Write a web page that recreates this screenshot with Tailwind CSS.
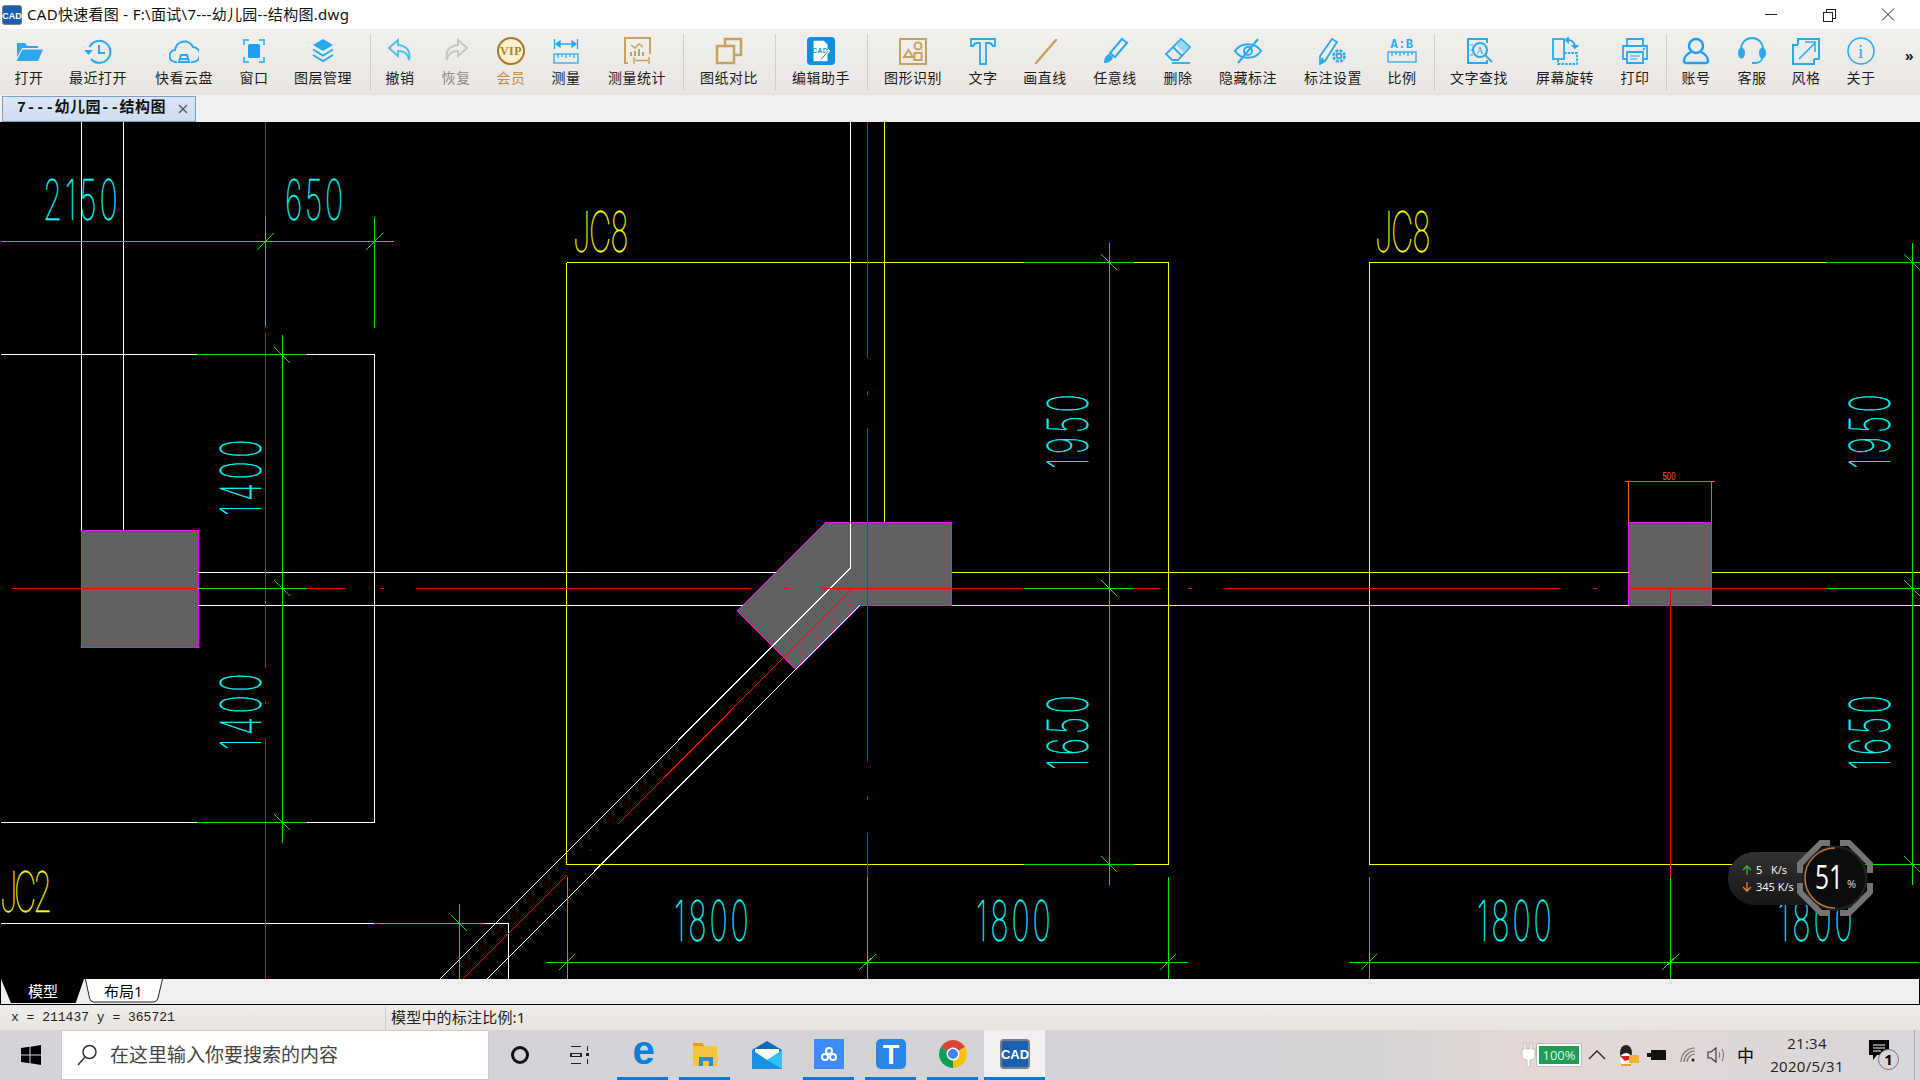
<!DOCTYPE html>
<html lang="zh">
<head>
<meta charset="UTF-8" />
<title>CAD快速看图</title>
<script src="https://cdn.jsdelivr.net/npm/@tailwindcss/browser@4"></script>
</head>
<body class="w-[1920px] h-[1080px] overflow-hidden flex flex-col bg-black text-black font-['Noto_Sans','Noto_Sans_CJK_SC',sans-serif]">

<!-- title bar -->
<header class="h-[29px] bg-white flex items-center shrink-0">
  <svg class="ml-[2px] w-[20px] h-[20px]" viewBox="0 0 20 20"><rect x="0.5" y="0.5" width="19" height="19" rx="2" fill="#1a5fb0" stroke="#7a7f86"/><text x="10" y="14" text-anchor="middle" font-size="9" font-weight="700" fill="#fff" font-family="Liberation Sans">CAD</text></svg>
  <span class="ml-[5px] text-[15px] leading-none tracking-[0.3px] text-[#111]">CAD快速看图 - F:\面试\7---幼儿园--结构图.dwg</span>
  <div class="ml-auto flex items-center">
    <svg class="w-[60px] h-[29px]" viewBox="0 0 60 29"><path d="M26 14.500h12" stroke="#222" fill="none" shape-rendering="crispEdges"/></svg>
    <svg class="w-[60px] h-[29px]" viewBox="0 0 60 29"><path d="M24.500 12.500h9v9h-9zM27.500 12v-3h9v9h-3" stroke="#222" fill="none" shape-rendering="crispEdges"/></svg>
    <svg class="w-[60px] h-[29px] mr-[1px]" viewBox="0 0 60 29"><path d="M23 8.500l12 12M35 8.500l-12 12" stroke="#222" fill="none"/></svg>
  </div>
</header>

<!-- toolbar -->
<nav class="h-[66px] shrink-0 flex pl-[2px] pt-[8px] bg-linear-to-b from-[#f1f0ee] to-[#e9e6e2] text-[14px] leading-[18px] tracking-[0.5px] text-[#1c1c1c]">
  <button class="w-[54px] flex flex-col items-center">
    <svg class="w-[30px] h-[28px]" viewBox="0 0 30 28" fill="#2aa9f0"><path d="M3 6h8l2 3h11v2H8l-5 9z"/><path d="M8.500 12.500H29L24 24H2.500z"/></svg>
    <span class="mt-[4px]">打开</span></button>
  <button class="w-[84px] flex flex-col items-center">
    <svg class="w-[30px] h-[28px]" viewBox="0 0 30 28" fill="none" stroke="#2aa9f0" stroke-width="2"><path d="M6.500 10A11 11 0 1 1 8 22"/><path d="M1 13h9l-4.500 5z" fill="#2aa9f0" stroke="none"/><path d="M16 8v8h6"/></svg>
    <span class="mt-[4px]">最近打开</span></button>
  <button class="w-[84px] ml-[2px] flex flex-col items-center">
    <svg class="w-[30px] h-[28px]" viewBox="0 0 30 28" fill="none" stroke="#2aa9f0" stroke-width="2"><path d="M8 25H7a6 6 0 0 1-1-12A9.500 9.500 0 0 1 24 10a7.500 7.500 0 0 1-1 15h-1"/><path d="M10 25l2-7h6l2 7z"/><path d="M10 22h10"/></svg>
    <span class="mt-[4px]">快看云盘</span></button>
  <button class="w-[54px] ml-[1px] flex flex-col items-center">
    <svg class="w-[30px] h-[28px]" viewBox="0 0 30 28" fill="none" stroke="#4dbbf3" stroke-width="2"><path d="M5 8V3h5M20 3h5v5M25 20v5h-5M10 25H5v-5"/><rect x="9" y="7" width="12" height="14" rx="1.500" fill="#1e9ff0" stroke="none"/></svg>
    <span class="mt-[4px]">窗口</span></button>
  <button class="w-[84px] flex flex-col items-center">
    <svg class="w-[30px] h-[28px]" viewBox="0 0 30 28" fill="none" stroke="#2aa9f0" stroke-width="2"><path d="M15 2l10 6-10 6-10-6z" fill="#2aa9f0" stroke="none"/><path d="M5 12.500l10 6 10-6"/><path d="M5 18l10 6 10-6"/></svg>
    <span class="mt-[4px]">图层管理</span></button>
  <div class="w-[1px] h-[56px] -mt-[3px] ml-[5px] bg-[#d0cec9]"></div>
  <button class="w-[54px] ml-[2px] flex flex-col items-center">
    <svg class="w-[30px] h-[28px]" viewBox="0 0 30 28" fill="none" stroke="#55bdf0" stroke-width="2"><path d="M13 3L4 11l9 8v-5c6 0 10 2 11 9 2-9-2-14-11-15z"/></svg>
    <span class="mt-[4px]">撤销</span></button>
  <button class="w-[54px] ml-[2px] flex flex-col items-center text-[#8d8d8d]">
    <svg class="w-[30px] h-[28px]" viewBox="0 0 30 28" fill="none" stroke="#c6c6c6" stroke-width="2"><path d="M17 3l9 8-9 8v-5c-6 0-10 2-11 9-2-9 2-14 11-15z"/></svg>
    <span class="mt-[4px]">恢复</span></button>
  <button class="w-[54px] ml-[1px] flex flex-col items-center text-[#bf8f3a]">
    <svg class="w-[30px] h-[28px]" viewBox="0 0 30 28"><circle cx="15" cy="14" r="13" fill="#faf0d0" stroke="#a9782a" stroke-width="2"/><text x="15" y="18" text-anchor="middle" font-size="12" font-weight="700" fill="#b67f22" font-family="Liberation Serif">VIP</text></svg>
    <span class="mt-[4px]">会员</span></button>
  <button class="w-[54px] ml-[1px] flex flex-col items-center">
    <svg class="w-[30px] h-[28px]" viewBox="0 0 30 28" fill="none" stroke="#2aa9f0" stroke-width="1.300"><path d="M3.500 2v10M26.500 2v10M5 7h20"/><path d="M5 7l4-3v6zM25 7l-4-3v6z" fill="#2aa9f0"/><rect x="3" y="17" width="24" height="9"/><path d="M7 17v4M11 17v3M15 17v4M19 17v3M23 17v4"/></svg>
    <span class="mt-[4px]">测量</span></button>
  <button class="w-[84px] ml-[2px] flex flex-col items-center">
    <svg class="w-[30px] h-[28px]" viewBox="0 0 30 28" fill="none" stroke="#c7a25c" stroke-width="2"><path d="M6 26H3V1h25v16"/><path d="M9 8l4 3 4-4 4 3" stroke-width="1.500"/><path d="M9 19v-4M13 19v-5M17 19v-7M21 19v-4" stroke-width="2"/><path d="M12 20v7M27 20v7M13 23.500h13" stroke-width="1.500"/></svg>
    <span class="mt-[4px]">测量统计</span></button>
  <div class="w-[1px] h-[56px] -mt-[3px] ml-[4px] bg-[#d0cec9]"></div>
  <button class="w-[84px] ml-[3px] flex flex-col items-center">
    <svg class="w-[30px] h-[28px]" viewBox="0 0 30 28" fill="none" stroke="#c7a25c" stroke-width="2.500"><path d="M11 9V2h16v16h-7"/><rect x="3" y="9" width="17" height="17"/></svg>
    <span class="mt-[4px]">图纸对比</span></button>
  <div class="w-[1px] h-[56px] -mt-[3px] ml-[4px] bg-[#d0cec9]"></div>
  <button class="w-[84px] ml-[3px] flex flex-col items-center">
    <svg class="w-[30px] h-[28px]" viewBox="0 0 30 30"><rect width="30" height="30" rx="4" fill="#0f8fe0"/><path d="M7 4h11l4 4v18H7z" fill="#fff"/><text x="14" y="17" text-anchor="middle" font-size="7" font-weight="700" fill="#0f8fe0" font-family="Liberation Sans">CAD</text><path d="M15 24l9-10" stroke="#fff" stroke-width="3"/><path d="M15 24l8-9" stroke="#0f8fe0" stroke-width="1"/></svg>
    <span class="mt-[4px]">编辑助手</span></button>
  <div class="w-[1px] h-[56px] -mt-[3px] ml-[4px] bg-[#d0cec9]"></div>
  <button class="w-[84px] ml-[3px] flex flex-col items-center">
    <svg class="w-[30px] h-[28px]" viewBox="0 0 30 28" fill="none" stroke="#c7a25c" stroke-width="2"><rect x="2" y="2" width="26" height="25"/><path d="M6 20l4.500-7 4.500 7z"/><circle cx="20" cy="9" r="3.500"/><rect x="16.500" y="16" width="7" height="7"/></svg>
    <span class="mt-[4px]">图形识别</span></button>
  <button class="w-[54px] ml-[1px] flex flex-col items-center">
    <svg class="w-[30px] h-[28px]" viewBox="0 0 30 28" fill="none" stroke="#2aa9ee" stroke-width="1.800"><path d="M3 2h24v7h-2c-1-2-2-3-4-3h-3v21h-6V6H9C7 6 6 7 5 9H3z"/></svg>
    <span class="mt-[4px]">文字</span></button>
  <button class="w-[70px] flex flex-col items-center">
    <svg class="w-[30px] h-[28px]" viewBox="0 0 30 28" fill="none" stroke="#c7a25c" stroke-width="2.500" stroke-linecap="round"><path d="M6 26L26 3"/></svg>
    <span class="mt-[4px]">画直线</span></button>
  <button class="w-[70px] flex flex-col items-center">
    <svg class="w-[30px] h-[28px]" viewBox="0 0 30 28" fill="none" stroke="#2aa9ee" stroke-width="2"><path d="M22 2l5 4-12 14-5-4z"/><path d="M9 17c-3 1-5 4-5 9 4 0 8-2 9-6z" fill="#2aa9ee" stroke="none"/></svg>
    <span class="mt-[4px]">任意线</span></button>
  <button class="w-[54px] ml-[1px] flex flex-col items-center">
    <svg class="w-[30px] h-[28px]" viewBox="0 0 30 28" fill="none" stroke="#2aa9ee" stroke-width="1.800"><path d="M18 2l9 8-12 13H9l-6-6z"/><path d="M10 10l9 9"/><path d="M13 8l5-5 8 7-5 6z" fill="#9cd5f5" stroke="none"/><path d="M9 26h18"/></svg>
    <span class="mt-[4px]">删除</span></button>
  <button class="w-[84px] ml-[1px] flex flex-col items-center">
    <svg class="w-[30px] h-[28px]" viewBox="0 0 30 28" fill="none" stroke="#2aa9ee" stroke-width="2"><path d="M2 14c6-9 20-9 26 0-6 9-20 9-26 0z"/><circle cx="15" cy="14" r="4"/><path d="M25 2L5 26"/></svg>
    <span class="mt-[4px]">隐藏标注</span></button>
  <button class="w-[84px] ml-[1px] flex flex-col items-center">
    <svg class="w-[30px] h-[28px]" viewBox="0 0 30 28" fill="none" stroke="#2aa9ee" stroke-width="1.800"><path d="M14 2l5 3-12 19-5 3 0-8z"/><path d="M4 20l-2 7 5-3z" fill="#2aa9ee" stroke="none"/><circle cx="21" cy="19" r="5.500" stroke-width="2.500" stroke-dasharray="3 1.300"/><circle cx="21" cy="19" r="2.500"/></svg>
    <span class="mt-[4px]">标注设置</span></button>
  <button class="w-[54px] flex flex-col items-center">
    <svg class="w-[30px] h-[28px]" viewBox="0 0 30 28" fill="none" stroke="#2aa9ee" stroke-width="1.300"><text x="15" y="11" text-anchor="middle" font-size="12" font-weight="700" fill="#2aa9ee" stroke="none" font-family="Liberation Mono">A:B</text><rect x="1" y="15" width="28" height="10"/><path d="M5 15v4M9 15v3M13 15v4M17 15v3M21 15v4M25 15v3"/></svg>
    <span class="mt-[4px]">比例</span></button>
  <div class="w-[1px] h-[56px] -mt-[3px] ml-[5px] bg-[#d0cec9]"></div>
  <button class="w-[84px] ml-[2px] flex flex-col items-center">
    <svg class="w-[30px] h-[28px]" viewBox="0 0 30 28" fill="none" stroke="#2aa9ee" stroke-width="2"><path d="M23 6V2H4v24h19v-3"/><circle cx="16" cy="13" r="7"/><path d="M21 18l7 7"/><path d="M6 8h3M6 13h3M6 18h3" stroke-width="1"/><text x="16" y="17" text-anchor="middle" font-size="10" fill="#2aa9ee" stroke="none" font-family="Liberation Serif">A</text></svg>
    <span class="mt-[4px]">文字查找</span></button>
  <button class="w-[84px] ml-[2px] flex flex-col items-center">
    <svg class="w-[30px] h-[28px]" viewBox="0 0 30 28" fill="none" stroke="#2aa9ee" stroke-width="1.800"><rect x="3" y="2" width="11" height="20"/><path d="M14 16h13v11H8v-5" stroke-dasharray="2.500 1.200"/><path d="M18 3c3 0 6 2 7 6"/><path d="M18 1v4l-2-2zM23 9h4l-2 2z" fill="#2aa9ee"/></svg>
    <span class="mt-[4px]">屏幕旋转</span></button>
  <button class="w-[54px] ml-[1px] flex flex-col items-center">
    <svg class="w-[30px] h-[28px]" viewBox="0 0 30 28" fill="none" stroke="#2aa9ee" stroke-width="1.800"><path d="M7 9V2h16v7"/><path d="M7 22H3V9h24v13h-4"/><path d="M7 15h16v11H7z"/><path d="M10 19h10M10 22h7" stroke-width="1"/><path d="M23 12h2"/></svg>
    <span class="mt-[4px]">打印</span></button>
  <div class="w-[1px] h-[56px] -mt-[3px] ml-[4px] bg-[#d0cec9]"></div>
  <button class="w-[54px] ml-[2px] flex flex-col items-center">
    <svg class="w-[30px] h-[28px]" viewBox="0 0 30 28" fill="none" stroke="#1ea1f1" stroke-width="2.500"><circle cx="15" cy="9" r="7"/><path d="M10 15c-4 2-7 5-7 9 0 1 1 2 2 2h20c1 0 2-1 2-2 0-4-3-7-7-9"/></svg>
    <span class="mt-[4px]">账号</span></button>
  <button class="w-[54px] ml-[2px] flex flex-col items-center">
    <svg class="w-[30px] h-[28px]" viewBox="0 0 30 28" fill="none" stroke="#2aa9ee" stroke-width="1.800"><path d="M4 12A11 11 0 0 1 26 12"/><ellipse cx="4.500" cy="16" rx="3.500" ry="5.500" fill="#2aa9ee" stroke="none"/><ellipse cx="25.500" cy="16" rx="3.500" ry="5.500" fill="#2aa9ee" stroke="none"/><path d="M25 21c0 3-3 5-7 5h-3"/></svg>
    <span class="mt-[4px]">客服</span></button>
  <button class="w-[54px] flex flex-col items-center">
    <svg class="w-[30px] h-[28px]" viewBox="0 0 30 28" fill="none" stroke="#2aa9ee" stroke-width="2"><path d="M7 8H2v19h21v-5"/><path d="M7 8V2h21v20h-5"/><path d="M8 22L24 6M14 5h10v10" stroke-width="1.500"/></svg>
    <span class="mt-[4px]">风格</span></button>
  <button class="w-[54px] ml-[1px] flex flex-col items-center">
    <svg class="w-[30px] h-[28px]" viewBox="0 0 30 28" fill="none" stroke="#2aa9ee" stroke-width="1.500"><circle cx="15" cy="14" r="13"/><text x="15" y="21" text-anchor="middle" font-size="19" fill="#2aa9ee" stroke="none" font-family="Liberation Serif">i</text></svg>
    <span class="mt-[4px]">关于</span></button>
  <span class="ml-[17px] mt-[10px] text-[14px] font-bold">»</span>
</nav>

<!-- drawing tabs -->
<div class="h-[27px] shrink-0 bg-[#efefef] flex pl-[2px] pt-[1px]">
  <div class="w-[194px] h-[26px] flex items-center justify-between pl-[14px] pr-[6px] bg-linear-to-b from-[#dbe6f5] to-[#cfdcef] border border-[#7d9ec9] text-[15px] font-bold tracking-[0.4px] text-[#111] font-['Liberation_Mono','Noto_Sans_CJK_SC',monospace]">
    <span>7---幼儿园--结构图</span>
    <svg class="w-[12px] h-[12px]" viewBox="0 0 12 12"><path d="M2 2l8 8M10 2l-8 8" stroke="#555" stroke-width="1.300"/></svg>
  </div>
</div>

<!-- drawing -->
<main class="relative h-[857px] shrink-0 bg-black overflow-hidden">
  <svg class="absolute inset-0 w-[1920px] h-[857px]" viewBox="0 122 1920 857" fill="none" shape-rendering="crispEdges">
    <g fill="#606060" stroke="#ff00ff">
      <rect x="81.500" y="530.500" width="117" height="117"/>
      <path d="M825.500 522.500H951.500V605.500H860L796 670 737 611z"/>
      <rect x="1628.500" y="522.500" width="83" height="83"/>
    </g>
    <path stroke="#ffffff" d="M81.500 122V530M123.500 122V530M1 354.500H197M307 354.500H374.500V822.500H307M1 822.500H197M198 572.500H776M198 605.500H743M850.500 122V568L440 979M860 605L487 979M1 923.500H374M484 923.500H508.500V979"/>
    <path stroke="#ffff00" d="M884.500 122V522M566.500 262.500V864.500H1024M1134 864.500H1168.500V262.500H1134M1024 262.500H566.500M952 572.500H1629M952 605.500H1629M1712 572.500H1920M1712 605.500H1920M1369.500 864.500V262.500H1826M1369.500 864.500H1732"/>
    <path stroke="#ff0000" d="M265.500 122V216M265.500 333V668M265.500 701V704M265.500 738V979M12 588.500H197M307 588.500H346M380 588.500H384M416 588.500H751M784 588.500H788M821 588.500H1023M1134 588.500H1160M1188 588.500H1192M1225 588.500H1560M1593 588.500H1597M1630 588.500H1826M867.500 122V358M867.500 391V395M867.500 428V762M867.500 796V800M867.500 833V877M1670.500 588V877M853 588L781 660 618 824M591 850L590 851M567 875L463 979"/>
    <path stroke="#00e600" d="M1 241.500H394M265.500 216V327M374.500 217V328M282.500 335V843M197 354.500H307M197 588.500H307M197 822.500H307M374 923.500H484M459.500 904V979M546 962.500H1188M567.500 877V979M867.500 877V979M1168.500 877V979M1109.500 243V885M1024 262.500H1134M1024 588.500H1134M1024 864.500H1134M1912.500 243V885M1826 262.500H1920M1826 588.500H1920M1855 864.500H1920M1349 962.500H1919M1369.500 877V979M1670.500 877V979M257 250L274 233M366 250L383 233M274 347L290 363M274 580L290 596M274 814L290 830M451 915L467 931M1101 254L1117 270M1101 580L1117 596M1101 856L1117 872M1904 254L1920 270M1904 580L1920 596M1904 856L1920 872M559 970L575 954M859 970L876 954M1160 970L1176 954M1361 970L1377 954M1662 970L1679 954"/>
    <path stroke="#e0641a" d="M1628.500 522V481.500H1711.500V522M1625 481.500H1715"/>
    <g fill="#00ffff" stroke="#00ffff" stroke-width="0.500" font-family="Inter" font-weight="100" font-size="56" shape-rendering="auto">
      <text transform="translate(43 220) scale(0.55 1)" textLength="136" lengthAdjust="spacing">2150</text>
      <text transform="translate(285 220) scale(0.55 1)" textLength="106" lengthAdjust="spacing">650</text>
      <text transform="translate(674 941) scale(0.55 1)" textLength="136" lengthAdjust="spacing">1800</text>
      <text transform="translate(976 941) scale(0.55 1)" textLength="136" lengthAdjust="spacing">1800</text>
      <text transform="translate(1477 941) scale(0.55 1)" textLength="136" lengthAdjust="spacing">1800</text>
      <text transform="translate(1778 941) scale(0.55 1)" textLength="136" lengthAdjust="spacing">1800</text>
      <text transform="translate(261 516) rotate(-90) scale(0.55 1)" textLength="139" lengthAdjust="spacing">1400</text>
      <text transform="translate(261 750) rotate(-90) scale(0.55 1)" textLength="139" lengthAdjust="spacing">1400</text>
      <text transform="translate(1088 469) rotate(-90) scale(0.55 1)" textLength="136" lengthAdjust="spacing">1950</text>
      <text transform="translate(1088 770) rotate(-90) scale(0.55 1)" textLength="136" lengthAdjust="spacing">1650</text>
      <text transform="translate(1890 469) rotate(-90) scale(0.55 1)" textLength="136" lengthAdjust="spacing">1950</text>
      <text transform="translate(1890 770) rotate(-90) scale(0.55 1)" textLength="136" lengthAdjust="spacing">1650</text>
    </g>
    <g fill="#ffff00" stroke="#ffff00" stroke-width="0.400" font-family="Inter" font-weight="100" font-size="56" shape-rendering="auto">
      <text transform="translate(573 252) scale(0.55 1)" textLength="101" lengthAdjust="spacing">JC8</text>
      <text transform="translate(1375 252) scale(0.55 1)" textLength="101" lengthAdjust="spacing">JC8</text>
      <text transform="translate(0 912) scale(0.55 1)" textLength="95" lengthAdjust="spacing">JC2</text>
    </g>
    <text x="1669" y="480" text-anchor="middle" fill="#e8641a" font-size="10" font-family="Liberation Sans" textLength="13" lengthAdjust="spacingAndGlyphs" shape-rendering="auto">500</text>
  </svg>

  <!-- network speed widget -->
  <div class="absolute left-[1728px] top-[730px] w-[80px] h-[53px] rounded-l-[27px] bg-linear-to-b from-[#333333] to-[#161616] pl-[14px] pt-[9px] text-[11px] leading-[17px] text-white font-['Open_Sans',sans-serif]">
    <div class="flex items-center">
      <svg class="w-[10px] h-[10px] mr-[4px]" viewBox="0 0 10 10" fill="none" stroke="#3fae55" stroke-width="1.300"><path d="M5 10V1M1 5l4-4 4 4"/></svg>
      <span class="w-[15px]">5</span><span>K/s</span>
    </div>
    <div class="flex items-center">
      <svg class="w-[10px] h-[10px] mr-[4px]" viewBox="0 0 10 10" fill="none" stroke="#e08a3c" stroke-width="1.300"><path d="M5 0v9M1 5l4 4 4-4"/></svg>
      <span>345 K/s</span>
    </div>
  </div>
  <svg class="absolute left-[1797px] top-[718px] w-[76px] h-[76px]" viewBox="0 0 76 76" fill="none">
    <circle cx="38" cy="38" r="33" fill="#141414"/>
    <g stroke="#747474" stroke-width="6">
      <path d="M33 3H24L3 24V33"/><path d="M43 3H52L73 24V33"/><path d="M33 73H24L3 52V43"/><path d="M43 73H52L73 52V43"/>
    </g>
    <circle cx="38" cy="38" r="31" fill="#0c0c0c" stroke="#222" stroke-width="2"/>
    <path d="M38 8A30 30 0 0 0 38 68" stroke="#b8773c" stroke-width="1.500"/>
    <text x="18" y="49" font-size="32" fill="#fff" font-family="Open Sans" textLength="28" lengthAdjust="spacingAndGlyphs">51</text>
    <text x="50" y="48" font-size="11" fill="#ddd" font-family="Open Sans">%</text>
  </svg>
</main>

<!-- layout tabs -->
<div class="h-[26px] shrink-0 flex bg-[#efefef] border-b border-x border-black text-[15px] leading-[24px]">
  <div class="w-[83px] h-[24px] pl-[27px] bg-black text-white [clip-path:polygon(0_0,100%_0,90%_100%,12%_100%)]">模型</div>
  <div class="relative w-[80px] h-[24px] pl-[20px]">
    <svg class="absolute left-0 top-0 w-[80px] h-[24px]" viewBox="0 0 80 24" fill="#fff" stroke="#222"><path d="M1 -2L5.500 19q1 4 4 4H70q3 0 4-4L79 -2"/></svg>
    <span class="relative">布局1</span>
  </div>
</div>

<!-- status bar -->
<div class="h-[25px] shrink-0 flex items-center bg-linear-to-b from-[#eeede9] to-[#e8e5e0]">
  <span class="w-[385px] pl-[11px] font-['Liberation_Mono',monospace] text-[13px] text-[#222]">x = 211437 y = 365721</span>
  <div class="w-[1px] h-[24px] bg-[#cfcdc8]"></div>
  <span class="ml-[5px] text-[15px] tracking-[0.2px] text-[#222]">模型中的标注比例:1</span>
</div>

<!-- windows taskbar -->
<footer class="h-[50px] shrink-0 flex bg-[linear-gradient(90deg,#d4d4d8_0%,#d3d3d6_70%,#e4d8d5_80%,#d8d6da_100%)]">
  <div class="w-[61px] flex items-center justify-center">
    <svg class="w-[20px] h-[20px]" viewBox="0 0 20 20" fill="#000"><path d="M0 3l8.500-1.200V9.500H0zM9.500 1.700L20 0v9.500H9.500zM0 10.500h8.500v7.700L0 17zM9.500 10.500H20V20L9.500 18.300z"/></svg>
  </div>
  <div class="w-[428px] flex items-center bg-white border border-[#c9c9c9]">
    <svg class="ml-[14px] w-[22px] h-[24px]" viewBox="0 0 22 24" fill="none" stroke="#333" stroke-width="1.500"><circle cx="13.500" cy="9" r="6.500"/><path d="M9 14L2 22"/></svg>
    <span class="ml-[12px] text-[19px] text-[#444]">在这里输入你要搜索的内容</span>
  </div>
  <div class="w-[62px] flex items-center justify-center">
    <svg class="w-[20px] h-[20px]" viewBox="0 0 20 20" fill="none" stroke="#111" stroke-width="3"><circle cx="10" cy="10" r="7.500"/></svg>
  </div>
  <div class="w-[58px] flex items-center justify-center">
    <svg class="w-[20px] h-[20px]" viewBox="0 0 20 20" fill="none" stroke="#222" stroke-width="1.200" shape-rendering="crispEdges"><path d="M1 1.500h10M1 8.500h10v3H1zM1 18.500h10M17.500 1v5M17.500 14v5"/><rect x="16" y="8" width="3" height="3" fill="#222" stroke="none"/></svg>
  </div>
  <div class="w-[51px] ml-[8px] flex items-center justify-center border-b-[3px] border-[#0078d7] text-[40px] leading-none font-bold text-[#0b7fdc] font-['Liberation_Sans',sans-serif]"><span class="-mt-[8px] ml-[2px]">e</span></div>
  <div class="w-[51px] ml-[11px] flex items-center justify-center border-b-[3px] border-[#0078d7]">
    <svg class="w-[30px] h-[28px]" viewBox="0 0 30 28"><path d="M3 3h9l3 3h12v20H3z" fill="#f5c542"/><path d="M3 3h9l3 3H3z" fill="#e2a100"/><rect x="9" y="17" width="14" height="9" fill="#2f88d6"/><rect x="13" y="21" width="6" height="5" fill="#f5c542"/></svg>
  </div>
  <div class="w-[51px] ml-[11px] flex items-center justify-center">
    <svg class="w-[30px] h-[28px]" viewBox="0 0 30 28"><path d="M0 9L15 0l15 9v19H0z" fill="#0f6cbd"/><path d="M3 8h24v7l-12 6-12-6z" fill="#fff"/><path d="M0 9l15 10L30 9v19H0z" fill="#38bdf0"/><path d="M0 28V9l15 10 15 9z" fill="#1b8fe0"/></svg>
  </div>
  <div class="w-[51px] ml-[11px] flex items-center justify-center border-b-[3px] border-[#0078d7]">
    <svg class="w-[30px] h-[30px]" viewBox="0 0 30 30" fill="none"><rect width="30" height="30" fill="#3d8bff"/><g stroke="#fff" stroke-width="2"><circle cx="15" cy="12" r="3"/><circle cx="11" cy="18" r="3"/><circle cx="19" cy="18" r="3"/></g></svg>
  </div>
  <div class="w-[51px] ml-[11px] flex items-center justify-center border-b-[3px] border-[#0078d7]">
    <svg class="w-[30px] h-[30px]" viewBox="0 0 30 30"><rect width="30" height="30" rx="5" fill="#2a86e4"/><text x="15" y="25" text-anchor="middle" font-size="27" font-weight="700" fill="#fff" font-family="Liberation Sans">T</text></svg>
  </div>
  <div class="w-[51px] ml-[11px] flex items-center justify-center border-b-[3px] border-[#0078d7]">
    <svg class="w-[30px] h-[30px]" viewBox="0 0 30 30"><path d="M15 15L2.900 8A14 14 0 0 1 27.100 8z" fill="#db4437"/><path d="M15 15L27.100 8A14 14 0 0 1 15 29z" fill="#f4c20d"/><path d="M15 15L15 29A14 14 0 0 1 2.900 8z" fill="#0f9d58"/><circle cx="15" cy="15" r="6.500" fill="#fff"/><circle cx="15" cy="15" r="5" fill="#4285f4"/></svg>
  </div>
  <div class="w-[61px] ml-[6px] flex items-center justify-center bg-[#f0f0f2] border-b-[3px] border-[#0078d7]">
    <svg class="w-[30px] h-[30px]" viewBox="0 0 30 30"><rect x="1" y="1" width="28" height="28" rx="3" fill="#1a5fb0" stroke="#7a7f86" stroke-width="2"/><text x="15" y="20" text-anchor="middle" font-size="13" font-weight="700" fill="#fff" font-family="Liberation Sans">CAD</text></svg>
  </div>

  <!-- tray -->
  <div class="ml-[476px] flex items-center">
    <svg class="w-[15px] h-[26px]" viewBox="0 0 15 26" fill="#fff" stroke="#999" stroke-width="0.500"><path d="M3 1h2v6h4V1h2v6h3v7c0 2-2 4-5 4v7H6v-7c-3 0-5-2-5-4V7h2z"/></svg>
    <div class="w-[46px] h-[24px] p-[2px] bg-white border border-[#bbb] rounded-[2px]"><div class="h-full bg-[#1f9d55] text-center text-[13px] leading-[18px] text-[#d9f5e3] font-['Open_Sans',sans-serif]">100%</div></div>
    <svg class="w-[18px] h-[12px] ml-[6px]" viewBox="0 0 18 12" fill="none" stroke="#222" stroke-width="1.300"><path d="M1 10l8-8 8 8"/></svg>
    <svg class="w-[22px] h-[22px] ml-[11px]" viewBox="0 0 22 22"><ellipse cx="9" cy="9" rx="6" ry="8" fill="#222"/><ellipse cx="9" cy="15" rx="6" ry="6" fill="#fff"/><path d="M3 12h11v3l-6 2z" fill="#d81e1e"/><path d="M4 20h10v2H4z" fill="#f0a020"/><rect x="12" y="11" width="10" height="8" rx="1" fill="#f0b030"/></svg>
    <svg class="w-[20px] h-[12px] ml-[8px]" viewBox="0 0 20 12"><rect x="4.500" y="1.500" width="14" height="9" fill="#111" stroke="#111"/><path d="M0 4h4v4H0z" fill="#111"/></svg>
    <svg class="w-[16px] h-[16px] ml-[13px]" viewBox="0 0 16 16" fill="none" stroke="#777" stroke-width="1.200"><path d="M1 15C1 7 7 1 15 1M4 15c0-6 5-11 11-11M7 15c0-4 4-8 8-8"/><circle cx="13" cy="13" r="1.500" fill="#222" stroke="none"/></svg>
    <svg class="w-[20px] h-[18px] ml-[11px]" viewBox="0 0 20 18" fill="none" stroke="#333" stroke-width="1.100"><path d="M1 6h3l5-4v14l-5-4H1z"/><path d="M12 6c1 2 1 4 0 6M15 3c2 4 2 8 0 12" stroke="#777"/></svg>
    <span class="ml-[10px] w-[18px] text-[17px] leading-none text-black">中</span>
    <div class="w-[100px] ml-[2px] flex flex-col items-center text-[15px] leading-[23px] tracking-[0.3px] text-[#222] font-['Open_Sans',sans-serif]"><span>21:34</span><span>2020/5/31</span></div>
    <div class="relative w-[30px] h-[30px] ml-[12px]">
      <svg class="absolute left-0 top-0 w-[20px] h-[20px]" viewBox="0 0 20 20"><path d="M0 0h20v15H8l-4 5v-5H0z" fill="#000"/><path d="M4 5h12M4 8h12M4 11h8" stroke="#fff"/></svg>
      <div class="absolute left-[9px] top-[9px] w-[21px] h-[21px] rounded-full bg-[#d8d6da] border border-[#777] text-center text-[15px] leading-[19px] font-bold">1</div>
    </div>
    <div class="w-[1px] h-[50px] ml-[15px] bg-[#aaa]"></div>
  </div>
</footer>
</body>
</html>
